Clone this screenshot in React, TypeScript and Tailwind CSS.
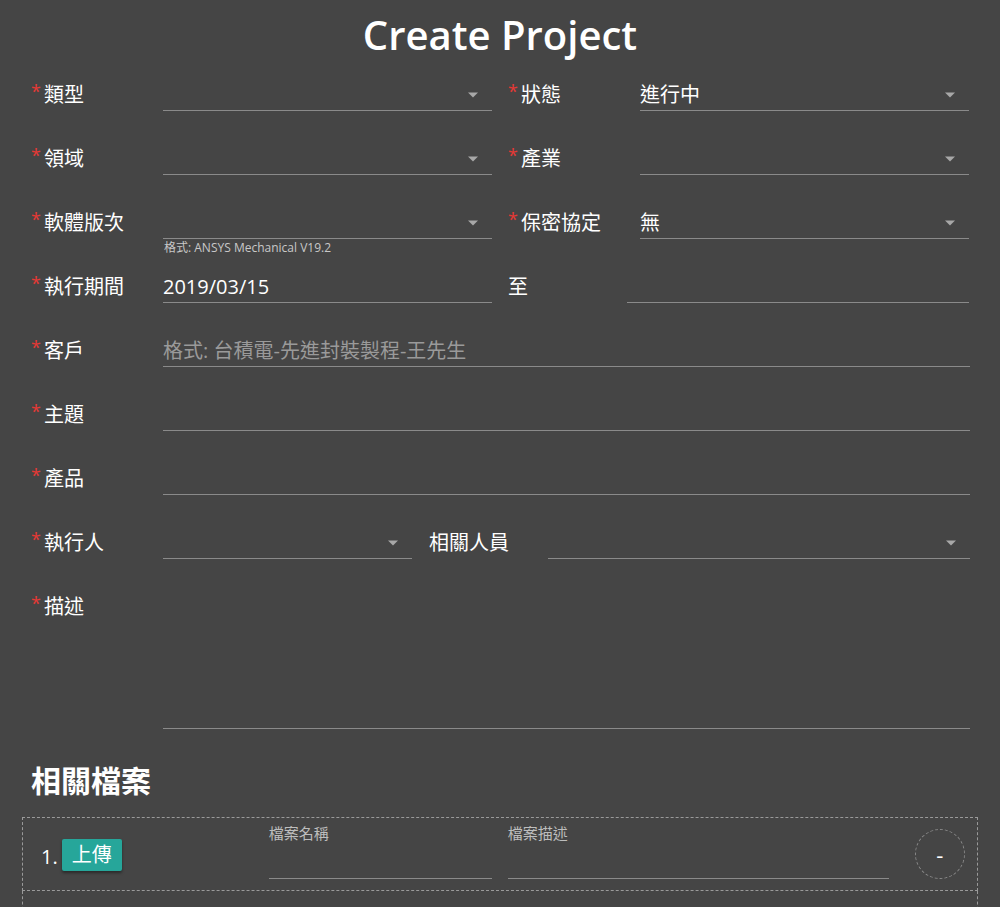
import type { ReactNode } from "react"

const font = { fontFamily: '"Open Sans", "Noto Sans CJK TC", sans-serif' }

function Arrow() {
  return (
    <span className="absolute right-[14px] top-1/2 -translate-y-1/2 w-0 h-0 border-l-[5px] border-r-[5px] border-t-[5px] border-l-transparent border-r-transparent border-t-[#a8a8a8]" />
  )
}

function Label({ text, required = true, width }: { text: string; required?: boolean; width: string }) {
  return (
    <div className={`${width} shrink-0 h-8 flex items-center text-[20px] text-white`}>
      {required && <span className="text-[#e53935] mr-[3px] -mt-2 text-[18px]">*</span>}
      <span>{text}</span>
    </div>
  )
}

function Field({ width, value, placeholder, select, children }: { width: string; value?: string; placeholder?: string; select?: boolean; children?: ReactNode }) {
  return (
    <div className={`${width} shrink-0 relative h-8 border-b border-[#8a8a8a] flex items-center text-[20px]`}>
      {value && <span className="text-white">{value}</span>}
      {placeholder && <span className="text-[#9a9a9a]">{placeholder}</span>}
      {select && <Arrow />}
      {children}
    </div>
  )
}

function Row({ children }: { children: ReactNode }) {
  return <div className="h-16 flex items-end">{children}</div>
}

export default function App() {
  return (
    <div className="min-h-[907px] w-full bg-[#454545] overflow-hidden" style={font}>
      <h1 className="text-center text-white text-[40px] font-semibold leading-none pt-[15px] h-[47px]">Create Project</h1>
      <div className="pl-[31px] pr-[30px]">
        <Row>
          <Label text="類型" width="w-[132px]" />
          <Field width="w-[329px]" select />
          <div className="w-[16px]" />
          <Label text="狀態" width="w-[132px]" />
          <Field width="w-[329px]" value="進行中" select />
        </Row>
        <Row>
          <Label text="領域" width="w-[132px]" />
          <Field width="w-[329px]" select />
          <div className="w-[16px]" />
          <Label text="產業" width="w-[132px]" />
          <Field width="w-[329px]" select />
        </Row>
        <Row>
          <Label text="軟體版次" width="w-[132px]" />
          <Field width="w-[329px]" select>
            <span className="absolute left-[1px] top-full mt-[1px] text-[12px] text-[#c8c8c8] whitespace-nowrap">格式: ANSYS Mechanical V19.2</span>
          </Field>
          <div className="w-[16px]" />
          <Label text="保密協定" width="w-[132px]" />
          <Field width="w-[329px]" value="無" select />
        </Row>
        <Row>
          <Label text="執行期間" width="w-[132px]" />
          <Field width="w-[329px]" value="2019/03/15" />
          <div className="w-[16px]" />
          <Label text="至" required={false} width="w-[119px]" />
          <Field width="w-[342px]" />
        </Row>
        <Row>
          <Label text="客戶" width="w-[132px]" />
          <Field width="w-[807px]" placeholder="格式: 台積電-先進封裝製程-王先生" />
        </Row>
        <Row>
          <Label text="主題" width="w-[132px]" />
          <Field width="w-[807px]" />
        </Row>
        <Row>
          <Label text="產品" width="w-[132px]" />
          <Field width="w-[807px]" />
        </Row>
        <Row>
          <Label text="執行人" width="w-[132px]" />
          <Field width="w-[249px]" select />
          <div className="w-[17px]" />
          <Label text="相關人員" required={false} width="w-[119px]" />
          <Field width="w-[422px]" select />
        </Row>
        <div className="flex pt-[32px]">
          <Label text="描述" width="w-[132px]" />
          <div className="w-[807px] h-[138px] border-b border-[#8a8a8a]" />
        </div>
        <h2 className="text-white text-[30px] font-bold mt-[37px] leading-none">相關檔案</h2>
      </div>
      <div className="ml-[22px] mr-[22px] mt-[21px] border border-dashed border-[#9a9a9a] h-[74px] flex items-center">
        <span className="text-white text-[20px] ml-[18px] mt-[6px]">1.</span>
        <button className="ml-[4px] mt-[2px] w-[60px] h-8 bg-[#26a69a] text-white text-[20px] rounded-[2px] shadow-[0_2px_3px_rgba(0,0,0,0.4)]">上傳</button>
        <div className="ml-[147px] w-[223px] self-stretch pt-[8px] flex flex-col">
          <span className="text-[15px] text-[#bdbdbd] leading-none">檔案名稱</span>
          <div className="mt-auto mb-[11px] border-b border-[#8a8a8a]" />
        </div>
        <div className="ml-[16px] w-[381px] self-stretch pt-[8px] flex flex-col">
          <span className="text-[15px] text-[#bdbdbd] leading-none">檔案描述</span>
          <div className="mt-auto mb-[11px] border-b border-[#8a8a8a]" />
        </div>
        <div className="ml-[26px] w-[50px] h-[50px] rounded-full border border-dashed border-[#8a8a8a] flex items-center justify-center text-white text-[22px] leading-none">-</div>
      </div>
      <div className="ml-[22px] mr-[22px] border border-t-0 border-dashed border-[#9a9a9a] h-[40px]" />
    </div>
  )
}
